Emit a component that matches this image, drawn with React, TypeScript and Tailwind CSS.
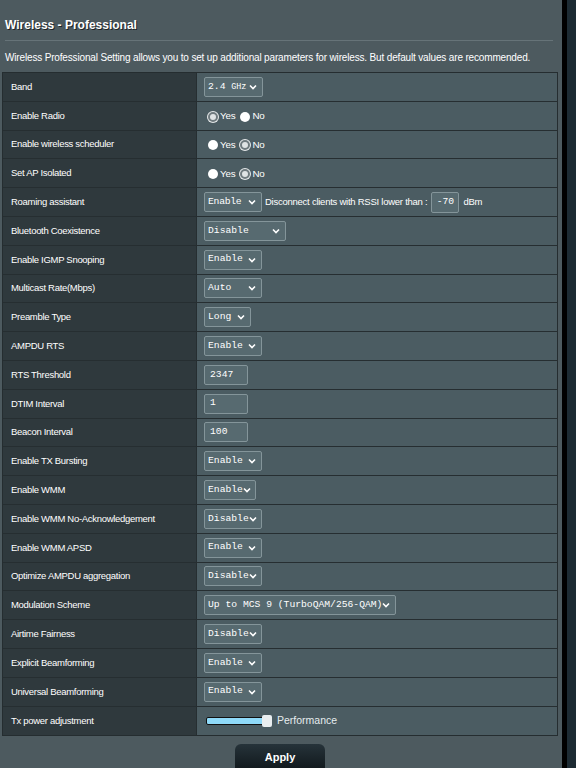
import React from "react";

type Cell =
  | { k: "select"; v: string; w: number }
  | { k: "radio"; yes: boolean }
  | { k: "input"; v: string }
  | { k: "roam" }
  | { k: "slider" };

const rows: [string, Cell][] = [
  ["Band", { k: "select", v: "2.4 GHz", w: 59 }],
  ["Enable Radio", { k: "radio", yes: true }],
  ["Enable wireless scheduler", { k: "radio", yes: false }],
  ["Set AP Isolated", { k: "radio", yes: false }],
  ["Roaming assistant", { k: "roam" }],
  ["Bluetooth Coexistence", { k: "select", v: "Disable", w: 82 }],
  ["Enable IGMP Snooping", { k: "select", v: "Enable", w: 58 }],
  ["Multicast Rate(Mbps)", { k: "select", v: "Auto", w: 58 }],
  ["Preamble Type", { k: "select", v: "Long", w: 47 }],
  ["AMPDU RTS", { k: "select", v: "Enable", w: 58 }],
  ["RTS Threshold", { k: "input", v: "2347" }],
  ["DTIM Interval", { k: "input", v: "1" }],
  ["Beacon Interval", { k: "input", v: "100" }],
  ["Enable TX Bursting", { k: "select", v: "Enable", w: 58 }],
  ["Enable WMM", { k: "select", v: "Enable", w: 52 }],
  ["Enable WMM No-Acknowledgement", { k: "select", v: "Disable", w: 58 }],
  ["Enable WMM APSD", { k: "select", v: "Enable", w: 58 }],
  ["Optimize AMPDU aggregation", { k: "select", v: "Disable", w: 58 }],
  ["Modulation Scheme", { k: "select", v: "Up to MCS 9 (TurboQAM/256-QAM)", w: 192 }],
  ["Airtime Fairness", { k: "select", v: "Disable", w: 58 }],
  ["Explicit Beamforming", { k: "select", v: "Enable", w: 58 }],
  ["Universal Beamforming", { k: "select", v: "Enable", w: 58 }],
  ["Tx power adjustment", { k: "slider" }],
];

const mono = { fontFamily: '"Liberation Mono", "DejaVu Sans Mono", monospace' };

const Chevron = () => (
  <svg width="8" height="6" viewBox="0 0 8 6" className="shrink-0">
    <path d="M1 1.5 L4 4.5 L7 1.5" fill="none" stroke="#ffffff" strokeWidth="1.6" />
  </svg>
);

const Select = ({ v, w }: { v: string; w: number }) => (
  <div
    className="h-[20px] flex items-center justify-between pl-[3px] pr-[5px] bg-[#576a70] border border-[#84959a] rounded-[2px] text-white text-[9.7px] whitespace-pre"
    style={{ width: w, ...mono }}
  >
    {v === "2.4 GHz" ? (
      <span>
        2.4 <span className="text-[8.4px]">GHz</span>
      </span>
    ) : (
      <span>{v}</span>
    )}
    <Chevron />
  </div>
);

const Radio = ({ on }: { on: boolean }) =>
  on ? (
    <span className="w-[10px] h-[10px] rounded-full bg-[#dfe3e4] border-[2px] border-[#6f7a7e] shadow-[0_0_0_1px_#e6e9ea] inline-block" />
  ) : (
    <span className="w-[10px] h-[10px] rounded-full bg-white inline-block" />
  );

const Input = ({ v, w }: { v: string; w: number }) => (
  <div
    className="h-[20px] flex items-center pl-[5px] bg-[#576a70] border border-[#84959a] rounded-[2px] text-white text-[9.7px]"
    style={{ width: w, ...mono }}
  >
    {v}
  </div>
);

function Right({ c }: { c: Cell }) {
  if (c.k === "select") return <Select v={c.v} w={c.w} />;
  if (c.k === "input") return <Input v={c.v} w={44} />;
  if (c.k === "radio")
    return (
      <div className="flex items-center text-[9.8px] tracking-[-0.2px] text-white pl-[4px] pt-[2px]">
        <Radio on={c.yes} />
        <span className="ml-[2px]">Yes</span>
        <span className="ml-[5px] flex"><Radio on={!c.yes} /></span>
        <span className="ml-[2px]">No</span>
      </div>
    );
  if (c.k === "roam")
    return (
      <div className="flex items-center text-[9.5px] tracking-[-0.25px] text-white whitespace-nowrap">
        <Select v="Enable" w={58} />
        <span className="ml-[3px]">Disconnect clients with RSSI lower than :</span>
        <div className="ml-[4px]">
          <div
            className="h-[21px] w-[28px] flex items-center justify-center bg-[#576a70] border border-[#84959a] rounded-[2px] text-white text-[9.7px] tracking-normal"
            style={mono}
          >
            -70
          </div>
        </div>
        <span className="ml-[4px]">dBm</span>
      </div>
    );
  return (
    <div className="flex items-center pl-[2px]">
      <div className="relative w-[66px] h-[12px] flex items-center">
        <div className="w-[60px] h-[8px] bg-[#8fdaf9] border border-[#111] rounded-[2px]" />
        <div className="absolute left-[56px] top-0 w-[10px] h-[12px] bg-[#e9eef0] rounded-[2px]" />
      </div>
      <span className="ml-[5px] text-[10.5px] text-[#e6ecee]">Performance</span>
    </div>
  );
}

export default function App() {
  return (
    <div
      className="w-[576px] h-[768px] overflow-hidden flex bg-[#4d5a5f]"
      style={{ fontFamily: '"Liberation Sans", Arial, sans-serif' }}
    >
      <div className="w-[562px] shrink-0 flex flex-col">
        <div className="pl-[5px] pr-[9px] pt-[17px]">
          <div className="text-[12px] leading-[16px] font-bold text-white [text-shadow:1px_1px_0_#1f2427]">
            Wireless - Professional
          </div>
          <div className="mt-[7px] h-px bg-[#667378]" />
          <div className="mt-[10px] text-[10px] tracking-[-0.16px] leading-[13px] text-white whitespace-nowrap">
            Wireless Professional Setting allows you to set up additional parameters for wireless. But default values are recommended.
          </div>
        </div>
        <div className="ml-[2px] mt-[8px] w-[556px] border border-[#252d30]">
          {rows.map(([label, c], i) => (
            <div
              key={i}
              className="flex h-[28.8px] border-b border-[#262e31] last:border-b-0"
            >
              <div className="w-[194px] shrink-0 bg-[#2f393d] flex items-center pl-[8px] text-[9.5px] tracking-[-0.3px] text-white border-r border-[#262e31] whitespace-nowrap">
                {label}
              </div>
              <div className="flex-1 bg-[#4b5c62] flex items-center pl-[7px]">
                <Right c={c} />
              </div>
            </div>
          ))}
        </div>
        <div className="flex justify-center mt-[8px] pl-[2px] pr-[4px]">
          <div className="w-[90px] h-[34px] rounded-[6px] bg-gradient-to-b from-[#26333a] to-[#0b1114] flex justify-center pt-[5px] text-[11px] font-bold text-white">
            Apply
          </div>
        </div>
      </div>
      <div className="w-[5px] bg-black" />
      <div className="flex-1 bg-[#1d2b33]" />
    </div>
  );
}
